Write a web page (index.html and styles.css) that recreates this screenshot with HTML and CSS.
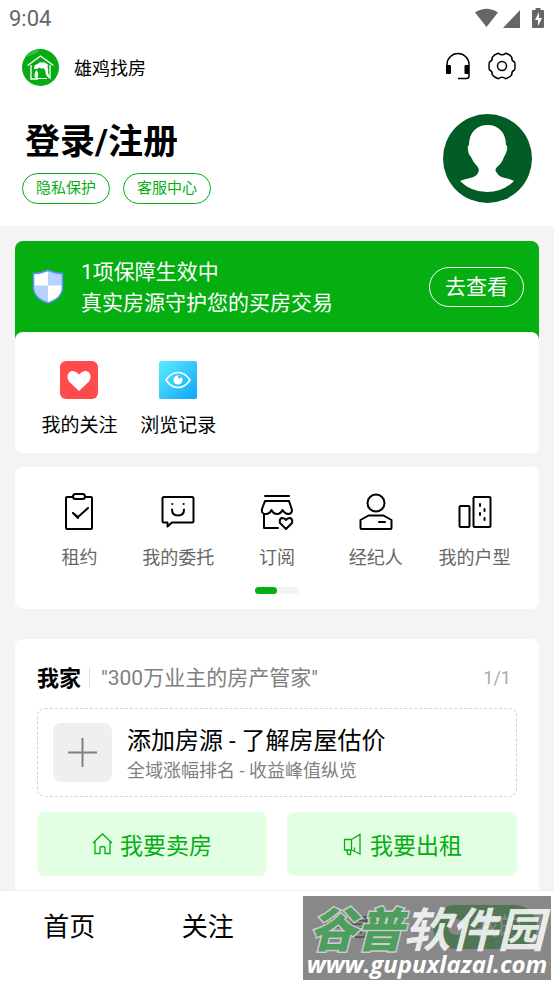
FILE: index.html
```html
<!DOCTYPE html>
<html lang="zh-CN">
<head>
<meta charset="utf-8">
<meta name="viewport" content="width=device-width, initial-scale=1">
<title>雄鸡找房</title>
<link rel="stylesheet" href="styles.css">
</head>
<body>
<header class="header">
  <div class="status">
    <span>9:04</span>
    <svg width="72" height="20" viewBox="0 0 72 20" fill="#666" aria-hidden="true">
      <path d="M1 4.500Q12.500-3 24 4.500L12.500 19Z"/>
      <path d="M46 2v18H29z"/>
      <path d="M61.500 0h5v2H69q1 0 1 1v16q0 1-1 1H59q-1 0-1-1V3q0-1 1-1h2.500z"/>
      <path d="M65 4l-4 8h3v6l4-8h-3z" fill="#fff"/>
    </svg>
  </div>
  <div class="brandbar">
    <svg class="logo" viewBox="0 0 37 37" aria-hidden="true">
      <circle cx="18.500" cy="18.500" r="18.500" fill="#08ab12"/>
      <path d="M3 8Q8 1 16 .3q2 2-2 4Q9 7 3 8z" fill="#35bc3d"/>
      <path d="M9 16v14h7M28 16v14M5.500 16.500L18.500 7l13 9.500" fill="none" stroke="#fff" stroke-width="1.300"/>
      <path d="M12 18q1-3 4-3 1-2.500 4-1.500 3-1 4 1 3 1 1.500 3 1 3 .5 6l2 6q-4-2-4.500-6 0-3-2-4.500-2 1.500-4-.5-2 2-5.500 1.500z" fill="#fff"/>
      <path d="M14 21q3 2 2 6 0 2.500-1.500 2.500-2.500-1-2-4z" fill="#fff"/>
      <path d="M16 29.500h9" stroke="#fff"/>
    </svg>
    <span class="brand">雄鸡找房</span>
    <button class="icon-btn" aria-label="客服">
      <svg width="28" height="28" viewBox="0 0 28 28" fill="none" stroke="#000" stroke-width="1.500">
        <path d="M3 15v-2.500a11 11 0 0 1 22 0V24q0 2.500-2.500 2.500H14"/>
        <path d="M2 14q0-1 1-1h3q1 0 1 1v7q0 1-1 1H3q-1 0-1-1zM20.500 14q0-1 1-1H25v9h-3.500q-1 0-1-1z" fill="#000" stroke="none"/>
      </svg>
    </button>
    <button class="icon-btn" aria-label="设置">
      <svg width="30" height="30" viewBox="-15 -15 30 30" fill="none" stroke="#000" stroke-width="1.500" stroke-linejoin="round">
        <path d="M12.500-4Q13-3.500 13 0T12.500 4Q9.500 5 9.800 8.700Q8 11.500 3.500 12.700Q0 9.800-3.500 12.700Q-8 11.500-9.800 8.700Q-9.500 5-12.500 4Q-13 3.500-13 0T-12.500-4Q-9.500-5-9.800-8.700Q-8-11.500-3.500-12.700Q0-9.800 3.500-12.700Q8-11.500 9.800-8.700Q9.500-5 12.500-4Z"/>
        <circle r="4.500"/>
      </svg>
    </button>
  </div>
  <div class="profile">
    <div>
      <h1>登录/注册</h1>
      <div class="pills">
        <button class="pill">隐私保护</button>
        <button class="pill">客服中心</button>
      </div>
    </div>
    <svg class="avatar" viewBox="0 0 89 89" role="img" aria-label="头像">
      <circle cx="44.500" cy="44.500" r="44.500" fill="#025c26"/>
      <path d="M44.500 11C55 11 63 18 63 31q2 1 1 5-1 4-3 7-2 6-7 10-3 3 0 6 2 4 8 5 5 1 9 3-11 11-27 11T17 67q5-2 10-3 6-1 8-5 2-4-1-7-4-4-6-9-3-3-3-7-1-4 1-5C26 18 34 11 44.500 11Z" fill="#fff"/>
    </svg>
  </div>
</header>

<main class="main">
  <section class="guard">
    <div class="guard-top">
      <svg width="32" height="36" viewBox="0 0 32 36" aria-hidden="true">
        <path d="M16 1.500q7 3 14.500 3V18q0 11-14.500 16Q1.500 29 1.500 18V4.500q7.500 0 14.500-3z" fill="#fff"/>
        <path d="M16 2q7 3 14 3v11.500H16zM2 16.500h14V34Q2 29 2 16.500z" fill="#b9d2fd"/>
        <path d="M16 1.500q7 3 14.500 3V18q0 11-14.500 16Q1.500 29 1.500 18V4.500q7.500 0 14.500-3z" fill="none" stroke="#5c95f3" stroke-width="1.500"/>
      </svg>
      <p>1项保障生效中<br>真实房源守护您的买房交易</p>
      <button class="check">去查看</button>
    </div>
    <div class="guard-links grid">
      <a class="tile" href="#">
        <svg width="38" height="38" viewBox="0 0 38 38" aria-hidden="true">
          <rect width="38" height="38" rx="6" fill="#ff4b4b"/>
          <path d="M19 30L9 20.500Q5.500 15 9.500 11q5-3 9.500 2.500 4.500-5.500 9.500-2.500 4 4 .5 9.500z" fill="#fff"/>
        </svg>
        <span>我的关注</span>
      </a>
      <a class="tile" href="#">
        <svg width="38" height="38" viewBox="0 0 38 38" aria-hidden="true">
          <defs><linearGradient id="sky" x1="0" y1="0" x2="1" y2="1"><stop stop-color="#5cecff"/><stop offset="1" stop-color="#0ea5f7"/></linearGradient></defs>
          <rect width="38" height="38" rx="2" fill="url(#sky)"/>
          <path d="M7 19q5-7.500 12-7.500T31 19q-5 7.500-12 7.500T7 19z" fill="none" stroke="#fff" stroke-width="1.700"/>
          <circle cx="19" cy="19" r="4.500" fill="#fff"/><circle cx="20.500" cy="16" r="1.600" fill="#32c5fb"/>
        </svg>
        <span>浏览记录</span>
      </a>
    </div>
  </section>

  <section class="services">
    <div class="grid">
      <a class="tile small" href="#">
        <svg class="line" viewBox="0 0 38 38"><rect x="6" y="4" width="26" height="32" rx="1"/><rect x="13" y="1" width="12" height="5" rx="2.500" fill="#fff"/><path d="M13 20l5 4 10-9M13 20l5 5"/></svg>
        <span>租约</span>
      </a>
      <a class="tile small" href="#">
        <svg class="line" viewBox="0 0 38 38"><path d="M5 4h28q1.500 0 1.500 1.500V28q0 1.500-1.500 1.500H13l-4.500 4V29.500H5Q3.500 29.500 3.500 28V5.500Q3.500 4 5 4z"/><path d="M13 16.500q0 6 6 6t6-6M13.300 11h.1M24.600 11h.1"/></svg>
        <span>我的委托</span>
      </a>
      <a class="tile small" href="#">
        <svg class="line" viewBox="0 0 38 38"><path d="M7 3h24M7 8h24l3 9q0 4-4 4-3 0-5.500-4-2 4-5.500 4t-5.500-4q-2 4-5.500 4-5 0-4-5zM6 21v14h14"/><path d="M28 36l-6-6q-1-4 2-5 3 0 4 2 1-2 4-2 3 1 2 5z"/></svg>
        <span>订阅</span>
      </a>
      <a class="tile small" href="#">
        <svg class="line" viewBox="0 0 38 38"><circle cx="19" cy="10" r="8.500"/><path d="M3.500 27l8-4.500h15l8 4.500v8q0 1-1 1h-29q-1 0-1-1zM22 29h6"/></svg>
        <span>经纪人</span>
      </a>
      <a class="tile small" href="#">
        <svg class="line" viewBox="0 0 38 38"><rect x="3.500" y="13" width="10" height="21" rx="1"/><rect x="17.500" y="4" width="17" height="30" rx="1"/><path d="M24 11v2M28.500 16v2M24 20v2M28.500 25v2"/></svg>
        <span>我的户型</span>
      </a>
    </div>
    <div class="pager"><i></i></div>
  </section>

  <section class="home">
    <div class="home-head">
      <h2>我家</h2>
      <span class="slogan">"300万业主的房产管家"</span>
      <span class="count">1/1</span>
    </div>
    <a class="add" href="#">
      <span class="plus"><svg width="29" height="29" viewBox="0 0 29 29" stroke="#808080" stroke-width="2" aria-hidden="true"><path d="M14.500 0v29M0 14.500h29"/></svg></span>
      <span class="add-text"><strong>添加房源 - 了解房屋估价</strong><small>全域涨幅排名 - 收益峰值纵览</small></span>
    </a>
    <div class="actions">
      <button class="action">
        <svg width="22" height="24" viewBox="0 0 22 24"><path d="M1 11L10.500 2 20 11M3 9.500v12h5V16q0-1.500 2.500-1.500T13 16v5.500h5v-12"/></svg>
        我要卖房
      </button>
      <button class="action">
        <svg width="22" height="24" viewBox="0 0 22 24"><path d="M2.500 7.500h7v10.500h-7zM9.500 7.500l8.500-5v19.500l-8.500-4M4.500 18l1.500 4.500h2.500L9 18M12.500 15.500v4"/></svg>
        我要出租
      </button>
    </div>
  </section>
</main>

<nav class="tabs">
  <a href="#">首页</a>
  <a href="#">关注</a>
  <a href="#">消息</a>
  <a href="#" class="active"><i></i>我的</a>
  <div class="mark">
    <div class="mark-name"><b>谷普</b>软件园</div>
    <div class="mark-url">www.gupuxlazal.com</div>
  </div>
</nav>
</body>
</html>
```
FILE: styles.css
```css
* { box-sizing: border-box; }
body {
  margin: 0;
  min-height: 100vh;
  display: flex;
  flex-direction: column;
  background: #f4f4f4;
  color: #000;
  font-family: Roboto, "Noto Sans CJK SC", sans-serif;
}
h1, h2, p { margin: 0; }
a { color: inherit; text-decoration: none; }
button { font: inherit; color: inherit; background: none; border: 0; padding: 0; }
svg { display: block; flex: none; }

.header { background: #fff; padding-bottom: 22px; }
.status {
  display: flex;
  align-items: center;
  justify-content: space-between;
  height: 36px;
  padding: 0 8px 0 9px;
  font-size: 22px;
  color: #666;
}
.brandbar {
  display: flex;
  align-items: center;
  height: 62px;
  padding: 0 37px 0 22px;
}
.logo { width: 37px; height: 37px; }
.brand { flex: 1; margin-left: 15px; font-size: 18px; }
.icon-btn { padding-bottom: 2px; }
.icon-btn + .icon-btn { margin-left: 15px; }
.profile {
  display: flex;
  justify-content: space-between;
  align-items: flex-start;
  padding: 16px 22px 0;
}
.profile h1 { padding: 4px 0 0 3px; font-size: 35px; line-height: 50px; font-weight: 700; }
.pills { display: flex; gap: 13px; margin-top: 5px; }
.pill {
  height: 31px;
  padding: 0 13px;
  border: 1px solid #05ae11;
  border-radius: 16px;
  color: #05ae11;
  font-size: 15px;
  line-height: 29px;
}
.avatar { width: 89px; height: 89px; }

.main { flex: 1; display: flex; flex-direction: column; padding: 15px 15px 0; }
.guard-top {
  display: flex;
  align-items: center;
  height: 99px;
  padding: 0 15px 8px 17px;
  border-radius: 8px 8px 0 0;
  background: #05ae11;
  color: #fff;
  font-size: 21px;
}
.guard-top p { flex: 1; margin-left: 17px; padding-top: 2px; line-height: 31px; }
.check { height: 40px; padding: 0 15px; border: 1px solid #fff; border-radius: 20px; line-height: 38px; }
.grid { display: grid; grid-template-columns: repeat(5, 1fr); padding: 0 15px; }
.guard-links { margin-top: -8px; background: #fff; border-radius: 8px; padding-top: 29px; padding-bottom: 12px; }
.tile { display: flex; flex-direction: column; align-items: center; gap: 12px; font-size: 19px; line-height: 30px; }
.small { font-size: 18px; color: #666; }
.line { width: 38px; height: 38px; fill: none; stroke: #000; stroke-width: 2; stroke-linecap: round; stroke-linejoin: round; }
.services { margin-top: 14px; padding: 26px 0 15px; background: #fff; border-radius: 8px; }
.pager { width: 44px; height: 7px; margin: 14px auto 0; border-radius: 4px; background: #f4f4f4; }
.pager i { display: block; width: 50%; height: 100%; border-radius: 4px; background: #05ae11; }

.home { flex: 1; margin-top: 30px; padding: 24px 22px 14px; background: #fff; border-radius: 8px 8px 0 0; }
.home-head { display: flex; align-items: center; height: 30px; }
.home-head h2 { padding-bottom: 4px; font-size: 22px; font-weight: 700; }
.slogan { flex: 1; margin-left: 8px; padding-left: 11px; border-left: 1px solid #ddd; font-size: 21px; line-height: 20px; color: #808080; }
.count { padding: 0 6px 2px 0; font-size: 18px; color: #aaa; }
.add {
  display: flex;
  align-items: center;
  gap: 15px;
  height: 89px;
  margin-top: 15px;
  padding: 0 15px;
  border: 1px dashed #d4d4d4;
  border-radius: 8px;
}
.plus { display: grid; place-items: center; width: 59px; height: 59px; border-radius: 8px; background: #efefef; }
.add-text { display: flex; flex-direction: column; padding-top: 2px; }
.add-text strong { font-size: 24px; line-height: 34px; font-weight: 400; }
.add-text small { font-size: 18px; line-height: 26px; color: #808080; }
.actions { display: grid; grid-template-columns: 1fr 1fr; gap: 20px; margin-top: 15px; }
.action {
  display: flex;
  align-items: center;
  justify-content: center;
  gap: 6px;
  height: 64px;
  border-radius: 8px;
  background: #e2ffe4;
  color: #05ae11;
  font-size: 23px;
}
.action svg { fill: none; stroke: #05ae11; stroke-width: 1.3; }

.tabs {
  position: relative;
  display: grid;
  grid-template-columns: repeat(4, 1fr);
  justify-items: center;
  align-items: start;
  height: 94px;
  padding-top: 14px;
  border-top: 1px solid #eee;
  background: #fff;
  font-size: 26px;
  line-height: 44px;
}
.active {
  display: flex;
  align-items: center;
  justify-content: center;
  gap: 12px;
  width: 104px;
  border-radius: 22px;
  background: #05ae11;
  color: #fff;
  font-size: 23px;
}
.active i { width: 16px; height: 16px; border-radius: 50%; background: #fff; }
.mark {
  position: absolute;
  right: 3px;
  bottom: 4px;
  width: 248px;
  height: 84px;
  padding-top: 8px;
  background: rgba(102, 102, 102, 0.78);
  color: rgba(255, 255, 255, 0.86);
  text-align: center;
  white-space: nowrap;
}
.mark-name { font: italic 700 47px/46px "Noto Sans CJK SC", sans-serif; }
.mark-name b { color: #4e9e60; -webkit-text-stroke: 3px #ccc; paint-order: stroke fill; }
.mark-url { font: italic 700 24px/28px "Open Sans", sans-serif; color: #fff; }
```
